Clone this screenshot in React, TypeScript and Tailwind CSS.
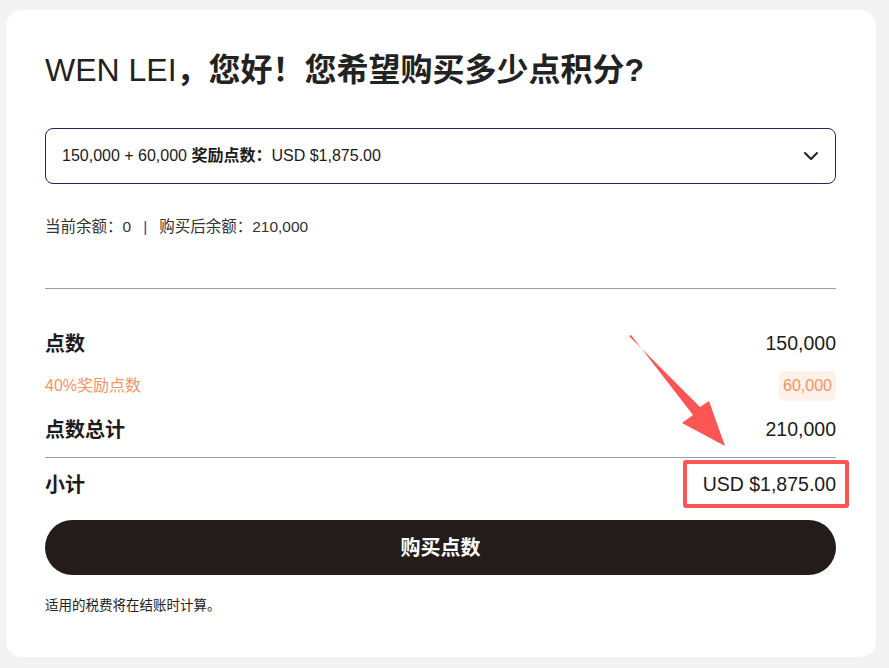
import { ChevronDown } from "lucide-react";

const font = { fontFamily: '"Liberation Sans", "Noto Sans CJK SC", sans-serif' };

export default function App() {
  return (
    <div className="min-h-screen w-full bg-[#f3f3f3] pt-[10px] pl-[6px]" style={font}>
      <div className="relative w-[870px] h-[647px] rounded-[16px] bg-white pt-10 pl-[39px] pr-10 text-[#1c1c1c]">
        {/* Title */}
        <h1 className="h-10 text-[32px] leading-10 text-[#222]">
          WEN LEI<span className="font-bold">，您好！您希望购买多少点积分?</span>
        </h1>

        {/* Package select */}
        <button className="mt-[38px] flex h-14 w-full items-center justify-between rounded-lg border border-[#1b2a5c] pl-4 pr-3 text-base text-[#1c1c1c]">
          <span>
            150,000 + 60,000 <span className="font-bold">奖励点数：</span>USD $1,875.00
          </span>
          <ChevronDown className="h-6 w-6 text-[#222]" strokeWidth={2} />
        </button>

        {/* Balance */}
        <p className="mt-[33px] h-5 text-[15.5px] leading-5 text-[#333]">
          当前余额：0<span className="mx-3 text-[#2a4590]">|</span>购买后余额：210,000
        </p>

        <div className="mt-[51px] h-px bg-[#98a1b3]" />

        {/* Summary */}
        <div className="mt-[34px]">
          <div className="flex h-[42px] items-center justify-between text-[19.5px]">
            <span className="text-xl font-bold">点数</span>
            <span>150,000</span>
          </div>
          <div className="flex h-[42px] items-center justify-between text-base text-[#f4945f]">
            <span>40%奖励点数</span>
            <span className="rounded-md bg-[#fdf1ea] px-1 py-[5px] text-base leading-5">60,000</span>
          </div>
          <div className="flex h-[46px] items-center justify-between text-[19.5px]">
            <span className="text-xl font-bold">点数总计</span>
            <span>210,000</span>
          </div>
          <div className="mt-1 h-px bg-[#98a1b3]" />
          <div className="flex h-[54px] items-center justify-between text-[19.5px]">
            <span className="text-xl font-bold">小计</span>
            <span>USD $1,875.00</span>
          </div>
        </div>

        {/* Action */}
        <button className="mt-2 flex h-[55px] w-full items-center justify-center rounded-full bg-[#241c1a] text-xl font-bold text-white">
          购买点数
        </button>

        <p className="mt-[22px] text-[13.5px] leading-[18px] text-[#222]">适用的税费将在结账时计算。</p>

        {/* Annotation overlay */}
        <div className="pointer-events-none absolute left-[677px] top-[450px] h-[48px] w-[166px] rounded-[3px] border-4 border-[#fd5454]" />
        <svg className="pointer-events-none absolute left-0 top-0" width="870" height="647" viewBox="0 0 870 647">
          <polygon points="623,326 694,397 703,391 719,436 676,413 687,405 625,325" fill="#fd5454" />
        </svg>
      </div>
    </div>
  );
}
